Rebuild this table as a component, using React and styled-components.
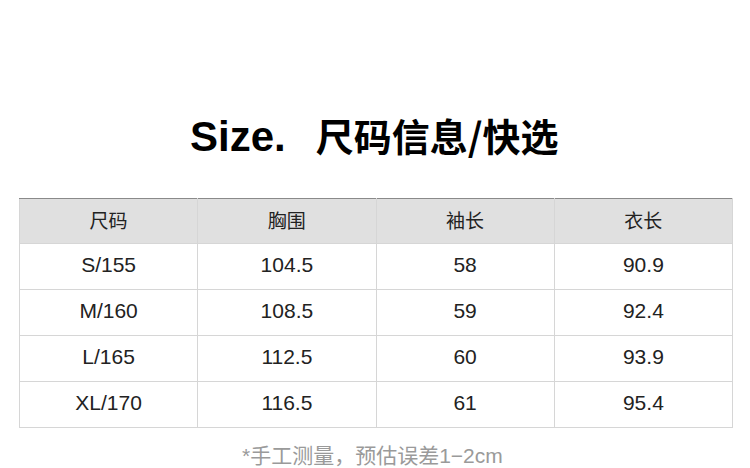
import React from "react";
import styled, { createGlobalStyle } from "styled-components";

const GlobalStyle = createGlobalStyle`
  html, body {
    margin: 0;
    padding: 0;
    background: #fff;
  }
  body {
    width: 750px;
    height: 468px;
    overflow: hidden;
    font-family: "Liberation Sans", "Noto Sans CJK SC", sans-serif;
  }
`;

const Page = styled.div`
  display: flex;
  flex-direction: column;
  align-items: flex-start;
  padding: 107px 0 0 19px;
`;

const Title = styled.h1`
  margin: 0 0 0 171px;
  display: flex;
  align-items: baseline;
  height: 59px;
  color: #000;
  font-weight: 700;
`;

const TitleLatin = styled.span`
  font-family: "Liberation Sans", sans-serif;
  font-size: 42px;
`;

const TitleCjk = styled.span`
  margin-left: 30px;
  font-family: "Noto Sans CJK SC", sans-serif;
  font-size: 38px;
`;

const Table = styled.table`
  margin-top: 32px;
  width: 714px;
  border-collapse: collapse;
  border: 1px solid #8a8a8a;
  table-layout: fixed;
`;

const Head = styled.th`
  height: 41px;
  padding: 0 0 3px;
  background: #e0e0e0;
  border: 1px solid #d6d6d6;
  border-top-color: #8a8a8a;
  font-family: "Noto Sans CJK SC", sans-serif;
  font-size: 19px;
  font-weight: 400;
  color: #222;
  text-align: center;
`;

const Cell = styled.td`
  height: 42px;
  padding: 0 0 3px;
  border: 1px solid #d6d6d6;
  font-family: "Liberation Sans", sans-serif;
  font-size: 21px;
  color: #222;
  text-align: center;
`;

const Note = styled.p`
  margin: 16px 0 0 223px;
  font-family: "Liberation Sans", "Noto Sans CJK SC", sans-serif;
  font-size: 21px;
  line-height: 24px;
  color: #9a9a9a;
  white-space: nowrap;
`;

const headers = ["尺码", "胸围", "袖长", "衣长"];
const rows = [
  ["S/155", "104.5", "58", "90.9"],
  ["M/160", "108.5", "59", "92.4"],
  ["L/165", "112.5", "60", "93.9"],
  ["XL/170", "116.5", "61", "95.4"],
];

export default function App() {
  return (
    <>
      <GlobalStyle />
      <Page>
        <Title>
          <TitleLatin>Size.</TitleLatin>
          <TitleCjk>尺码信息/快选</TitleCjk>
        </Title>
        <Table>
          <thead>
            <tr>
              {headers.map((h) => (
                <Head key={h}>{h}</Head>
              ))}
            </tr>
          </thead>
          <tbody>
            {rows.map((r) => (
              <tr key={r[0]}>
                {r.map((v, i) => (
                  <Cell key={i}>{v}</Cell>
                ))}
              </tr>
            ))}
          </tbody>
        </Table>
        <Note>*手工测量，预估误差1−2cm</Note>
      </Page>
    </>
  );
}
